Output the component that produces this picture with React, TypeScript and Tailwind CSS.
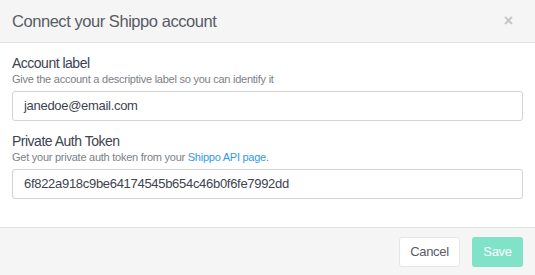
const font = { fontFamily: '"Helvetica Neue", "Liberation Sans", Arial, sans-serif' };

export default function App() {
  return (
    <div className="flex h-[275px] w-[535px] flex-col overflow-hidden bg-white" style={font}>
      <div className="flex h-[43px] shrink-0 items-center justify-between border-b border-[#e3e3e3] bg-[#f5f5f5] pl-3 pr-[22px]">
        <h1 className="text-[16.5px] tracking-[-0.45px] text-[#575c66]">Connect your Shippo account</h1>
        <span className="text-[16px] font-bold leading-none text-[#c4c4c4]">×</span>
      </div>

      <div className="flex flex-1 flex-col px-3 pt-[11px]">
        <label className="text-[14px] leading-[18px] tracking-[-0.5px] text-[#3e4350]">Account label</label>
        <p className="text-[11px] leading-[15px] tracking-[-0.25px] text-[#7b7f87]">
          Give the account a descriptive label so you can identify it
        </p>
        <div className="mt-[4px] flex h-[30px] items-center rounded-[3px] border border-[#d3d3d3] px-[11px] text-[13px] tracking-[-0.3px] text-[#3e4350]">
          janedoe@email.com
        </div>

        <label className="mt-[11px] text-[14px] leading-[18px] tracking-[-0.5px] text-[#3e4350]">Private Auth Token</label>
        <p className="text-[11px] leading-[15px] tracking-[-0.25px] text-[#7b7f87]">
          Get your private auth token from your <span className="text-[#2f9ae6]">Shippo API page</span>.
        </p>
        <div className="mt-[4px] flex h-[30px] items-center rounded-[3px] border border-[#d3d3d3] px-[11px] text-[13px] tracking-[-0.3px] text-[#3e4350]">
          6f822a918c9be64174545b654c46b0f6fe7992dd
        </div>
      </div>

      <div className="flex h-[48px] shrink-0 items-center justify-end gap-3 border-t border-[#e3e3e3] bg-[#f5f5f5] px-3">
        <button className="h-[30px] w-[61px] rounded-[3px] border border-[#e6e6e6] bg-white text-[13px] tracking-[-0.3px] text-[#575c66]">
          Cancel
        </button>
        <button className="h-[30px] w-[51px] rounded-[3px] bg-[#80e2c6] text-[13px] tracking-[-0.3px] text-white">
          Save
        </button>
      </div>
    </div>
  );
}
